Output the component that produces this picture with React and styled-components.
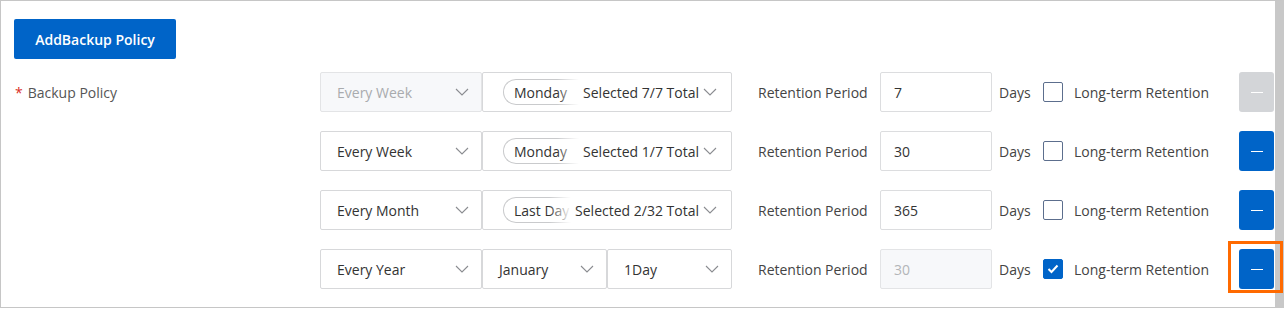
import React from "react";
import styled, { createGlobalStyle } from "styled-components";

const GlobalStyle = createGlobalStyle`
  body {
    margin: 0;
    background: #fff;
    font-family: "Open Sans", "Noto Sans", Arial, sans-serif;
    font-size: 14px;
    color: #333;
  }
`;

const Frame = styled.div`
  position: relative;
  width: 1284px;
  height: 308px;
  box-sizing: border-box;
  border: 1px solid #c6c6c6;
  border-right: 9px solid #c8c8c8;
  padding: 18px 1px 0 13px;
  background: #fff;
`;

const AddButton = styled.button`
  width: 162px;
  height: 40px;
  border: none;
  border-radius: 2px;
  background: #0064c8;
  color: #fff;
  font-family: inherit;
  font-size: 14px;
  font-weight: 600;
  cursor: pointer;
`;

const Form = styled.div`
  display: grid;
  grid-template-columns: 306px 1fr;
  margin-top: 13px;
`;

const FieldLabel = styled.div`
  height: 40px;
  display: flex;
  align-items: center;
  color: #555;
  padding-left: 1px;

  span {
    color: #d93026;
    margin-right: 5px;
  }
`;

const Rows = styled.div`
  display: flex;
  flex-direction: column;
  gap: 19px;
`;

const Row = styled.div`
  display: flex;
  align-items: center;
  height: 40px;
`;

const SelectGroup = styled.div`
  display: flex;
  width: 412px;
  flex: none;
`;

const Select = styled.div`
  box-sizing: border-box;
  height: 40px;
  width: ${(p) => (p.$width ? `${p.$width}px` : "auto")};
  flex: ${(p) => (p.$width ? "none" : "1")};
  min-width: 0;
  display: flex;
  align-items: center;
  padding: 0 ${(p) => (p.$multi ? 14 : 12)}px 0 ${(p) => (p.$multi ? 20 : 16)}px;
  border: 1px solid ${(p) => (p.$disabled ? "#e3e4e6" : "#d7d8da")};
  border-radius: 2px;
  background: ${(p) => (p.$disabled ? "#f7f8fa" : "#fff")};
  color: ${(p) => (p.$disabled ? "#a9abae" : "#333")};
  white-space: nowrap;
`;

const SelectText = styled.span`
  flex: 1;
`;

const TagArea = styled.div`
  flex: 1;
  min-width: 0;
  overflow: hidden;
  display: flex;
`;

const Tag = styled.span`
  flex: none;
  height: 26px;
  box-sizing: border-box;
  display: flex;
  align-items: center;
  padding: 0 12px 0 10px;
  border: 1px solid #c9cacc;
  border-right: none;
  border-radius: 13px 0 0 13px;
  color: #333;
`;

const Summary = styled.span`
  position: relative;
  flex: none;
  padding-left: 4px;
  background: #fff;

  &::before {
    content: "";
    position: absolute;
    left: -22px;
    top: -6px;
    bottom: -6px;
    width: 22px;
    background: linear-gradient(to right, rgba(255, 255, 255, 0), #fff);
  }
`;

const Chevron = styled.svg`
  flex: none;
  width: 14px;
  height: 8px;
  margin-left: ${(p) => (p.$tight ? 4 : 8)}px;
`;

const RetentionLabel = styled.span`
  flex: none;
  width: 122px;
  margin-left: 26px;
  color: #444;
`;

const DaysInput = styled.div`
  flex: none;
  box-sizing: border-box;
  width: 112px;
  height: 40px;
  display: flex;
  align-items: center;
  padding: 0 13px;
  border: 1px solid ${(p) => (p.$disabled ? "#e3e4e6" : "#dcdddf")};
  border-radius: 2px;
  background: ${(p) => (p.$disabled ? "#f7f8fa" : "#fff")};
  color: ${(p) => (p.$disabled ? "#b3b5b8" : "#333")};
`;

const Unit = styled.span`
  flex: none;
  width: 51px;
  padding-left: 7px;
  box-sizing: border-box;
  color: #444;
`;

const CheckLabel = styled.label`
  display: flex;
  align-items: center;
  gap: 11px;
  color: #444;
`;

const Box = styled.span`
  box-sizing: border-box;
  width: 20px;
  height: 20px;
  display: flex;
  align-items: center;
  justify-content: center;
  border: 1px solid ${(p) => (p.$checked ? "#0064c8" : "#5c6e8d")};
  border-radius: 2px;
  background: ${(p) => (p.$checked ? "#0064c8" : "#fff")};
`;

const MinusButton = styled.button`
  flex: none;
  margin-left: auto;
  width: 35px;
  height: 40px;
  border: none;
  border-radius: 3px;
  background: ${(p) => (p.$disabled ? "#d3d5d8" : "#0064c8")};
  display: flex;
  align-items: center;
  justify-content: center;
  padding: 0;

  &::before {
    content: "";
    width: 12px;
    height: 1px;
    background: #fff;
  }
`;

const Highlight = styled.div`
  position: absolute;
  left: 1227px;
  top: 240px;
  width: 55px;
  height: 52px;
  box-sizing: border-box;
  border: 3px solid #ff6a00;
  pointer-events: none;
`;

const ChevronIcon = ({ tight }) => (
  <Chevron $tight={tight} viewBox="0 0 14 8">
    <path d="M1 1l6 6 6-6" fill="none" stroke="#8a8c90" strokeWidth="1.1" />
  </Chevron>
);

const rows = [
  {
    freq: "Every Week",
    tag: "Monday",
    summary: "Selected 7/7 Total",
    days: "7",
    disabled: true,
  },
  { freq: "Every Week", tag: "Monday", summary: "Selected 1/7 Total", days: "30" },
  { freq: "Every Month", tag: "Last Day", summary: "Selected 2/32 Total", days: "365" },
  { freq: "Every Year", month: "January", day: "1Day", days: "30", longTerm: true },
];

const PolicyRow = ({ row }) => (
  <Row>
    <SelectGroup>
      <Select $width={162} $disabled={row.disabled}>
        <SelectText>{row.freq}</SelectText>
        <ChevronIcon />
      </Select>
      {row.month ? (
        <>
          <Select>
            <SelectText>{row.month}</SelectText>
            <ChevronIcon />
          </Select>
          <Select>
            <SelectText>{row.day}</SelectText>
            <ChevronIcon />
          </Select>
        </>
      ) : (
        <Select $multi>
          <TagArea>
            <Tag>{row.tag}</Tag>
          </TagArea>
          <Summary>{row.summary}</Summary>
          <ChevronIcon tight />
        </Select>
      )}
    </SelectGroup>
    <RetentionLabel>Retention Period</RetentionLabel>
    <DaysInput $disabled={row.longTerm}>{row.days}</DaysInput>
    <Unit>Days</Unit>
    <CheckLabel>
      <Box $checked={row.longTerm}>
        {row.longTerm && (
          <svg width="12" height="10" viewBox="0 0 12 10">
            <path d="M1.5 5l3 3 6-6.5" fill="none" stroke="#fff" strokeWidth="2" />
          </svg>
        )}
      </Box>
      Long-term Retention
    </CheckLabel>
    <MinusButton $disabled={row.disabled} aria-label="Remove" />
  </Row>
);

export default function App() {
  return (
    <>
      <GlobalStyle />
      <Frame>
        <AddButton>AddBackup Policy</AddButton>
        <Form>
          <FieldLabel>
            <span>*</span>Backup Policy
          </FieldLabel>
          <Rows>
            {rows.map((row, i) => (
              <PolicyRow key={i} row={row} />
            ))}
          </Rows>
        </Form>
        <Highlight />
      </Frame>
    </>
  );
}
